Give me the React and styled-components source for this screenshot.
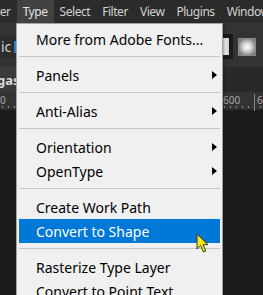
import React from "react";
import styled, { createGlobalStyle } from "styled-components";

const Global = createGlobalStyle`
  html, body { margin: 0; padding: 0; background: #1e1e1e; overflow: hidden; }
  * { box-sizing: border-box; }
`;

const Screen = styled.div`
  position: relative;
  width: 263px;
  height: 295px;
  overflow: hidden;
  display: flex;
  flex-direction: column;
  background: #1d1d1d;
  font-family: "Noto Sans", "Open Sans", sans-serif;
`;

const MenuBar = styled.div`
  height: 23px;
  flex: none;
  display: flex;
  align-items: stretch;
  background: #2b2b2b;
  margin-left: -24px;
  white-space: nowrap;
`;

const BarItem = styled.div`
  display: flex;
  align-items: center;
  padding: 0 6px;
  font-size: 12px;
  letter-spacing: -0.45px;
  color: ${(p) => (p.$active ? "#e2e2e2" : "#d2d2d2")};
  background: ${(p) => (p.$active ? "#424242" : "transparent")};
`;

const OptionsBar = styled.div`
  height: 44px;
  flex: none;
  display: flex;
  align-items: center;
  justify-content: space-between;
  background: #333333;
  padding-top: 3px;
`;

const FontField = styled.div`
  display: flex;
  align-items: center;
  height: 21px;
  padding-left: 1px;
  gap: 3px;
  font-size: 14px;
  color: #d6d6d6;
  background: #2c2c2c;
  width: 30px;
`;

const Caret = styled.span`
  width: 3px;
  height: 12px;
  background: #2f7fd0;
`;

const Swatches = styled.div`
  display: flex;
  align-items: center;
  gap: 5px;
  padding-right: 7px;
`;

const ColorBox = styled.div`
  width: 24px;
  height: 25px;
  border: 4px solid #1b1b1b;
  background: linear-gradient(90deg, #ffffff 0%, #f4f4f4 60%, #cfcfcf 100%);
`;

const GradientSwatch = styled.div`
  width: 18px;
  height: 18px;
  border: 1px solid #8a8a8a;
  background: radial-gradient(circle at 50% 50%, #ffffff 0%, #d9d9d9 35%, #8a8a8a 75%, #5c5c5c 100%);
`;

const TabBar = styled.div`
  height: 25px;
  flex: none;
  display: flex;
  align-items: stretch;
  background: #292929;
`;

const Tab = styled.div`
  width: 80px;
  display: flex;
  align-items: center;
  margin-left: -19px;
  padding-top: 1px;
  font-size: 13px;
  font-weight: 700;
  color: #dcdcdc;
  background: #3a3a3a;
`;

const Ruler = styled.div`
  height: 18px;
  flex: none;
  position: relative;
  background: #333333;
  border-bottom: 1px solid #2a2a2a;
  font-size: 10px;
  color: #a8a8a8;
  &::after {
    content: "";
    position: absolute;
    left: 0;
    right: 0;
    bottom: 1px;
    height: 2px;
    background: repeating-linear-gradient(90deg, #8a8a8a 0 1px, transparent 1px 6px);
    background-position: 2px 0;
  }
`;

const RulerMark = styled.div`
  position: absolute;
  top: 2px;
  left: ${(p) => p.$x}px;
  padding-left: 2px;
  line-height: 12px;
  border-left: ${(p) => (p.$major ? "1px solid #8a8a8a" : "none")};
  height: 17px;
`;

const Canvas = styled.div`
  flex: 1;
  background: #1c1c1c;
`;

const Menu = styled.div`
  position: absolute;
  left: 16px;
  top: 23px;
  width: 207px;
  background: #f0f0f0;
  border: 1px solid #a3a3a3;
  padding: 3px 0 10px;
  box-shadow: 1px 1px 2px rgba(0, 0, 0, 0.35);
`;

const Item = styled.div`
  height: 24px;
  margin: 0 2px;
  padding: 0 0 0 17px;
  display: flex;
  align-items: center;
  justify-content: space-between;
  font-size: 14px;
  color: ${(p) => (p.$hot ? "#ffffff" : "#000000")};
  background: ${(p) => (p.$hot ? "#0078d7" : "transparent")};
  white-space: nowrap;
`;

const Arrow = styled.span`
  width: 0;
  height: 0;
  margin-right: 3px;
  border-top: 4.5px solid transparent;
  border-bottom: 4.5px solid transparent;
  border-left: 5px solid #000;
`;

const Separator = styled.div`
  height: 12px;
  margin: 0 2px;
  padding-top: 5px;
  &::before {
    content: "";
    display: block;
    height: 1px;
    background: #c6c6c6;
  }
`;

const Cursor = styled.svg`
  position: absolute;
  left: 196px;
  top: 233px;
  width: 14px;
  height: 21px;
`;

const menu = [
  { label: "More from Adobe Fonts..." },
  "sep",
  { label: "Panels", sub: true },
  "sep",
  { label: "Anti-Alias", sub: true },
  "sep",
  { label: "Orientation", sub: true },
  { label: "OpenType", sub: true },
  "sep",
  { label: "Create Work Path" },
  { label: "Convert to Shape", hot: true },
  "sep",
  { label: "Rasterize Type Layer" },
  { label: "Convert to Point Text" },
];

const bar = ["Layer", "Type", "Select", "Filter", "View", "Plugins", "Window"];

export default function App() {
  return (
    <>
      <Global />
      <Screen>
        <MenuBar>
          {bar.map((b) => (
            <BarItem key={b} $active={b === "Type"}>
              {b}
            </BarItem>
          ))}
        </MenuBar>
        <OptionsBar>
          <FontField>
            ic
            <Caret />
          </FontField>
          <Swatches>
            <ColorBox />
            <GradientSwatch />
          </Swatches>
        </OptionsBar>
        <TabBar>
          <Tab>Vegas</Tab>
        </TabBar>
        <Ruler>
          <RulerMark $x={-2}>0</RulerMark>
          <RulerMark $x={221}>600</RulerMark>
          <RulerMark $x={254} $major>
            650
          </RulerMark>
        </Ruler>
        <Canvas />
        <Menu>
          {menu.map((m, i) =>
            m === "sep" ? (
              <Separator key={i} />
            ) : (
              <Item key={i} $hot={m.hot}>
                <span>{m.label}</span>
                {m.sub && <Arrow />}
              </Item>
            )
          )}
        </Menu>
        <Cursor viewBox="0 0 14 21">
          <path
            d="M1 1 L1 16 L4.6 12.6 L7.4 19 L9.8 18 L7.1 11.7 L12 11.7 Z"
            fill="#f6e61a"
            stroke="#3a3a10"
            strokeWidth="1"
            strokeLinejoin="round"
          />
        </Cursor>
      </Screen>
    </>
  );
}
